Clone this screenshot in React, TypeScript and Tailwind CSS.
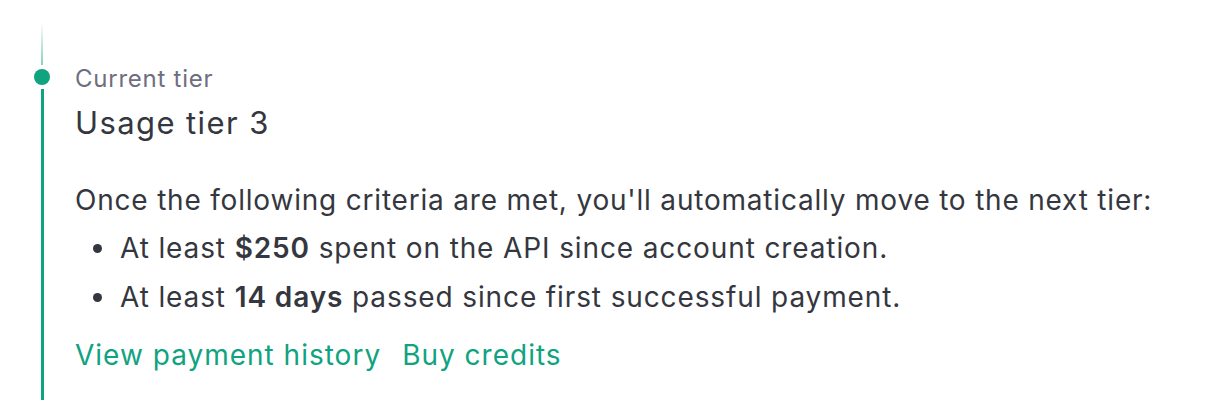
export default function App() {
  return (
    <div className="w-[1218px] h-[400px] overflow-hidden bg-white font-['Inter','Noto_Sans',sans-serif] text-[#353740]">
      <div className="flex h-full pl-[34px] pt-[22px]">
        {/* timeline rail */}
        <div className="flex flex-col items-center w-[16px] shrink-0">
          <div className="w-[2px] h-[43px] bg-gradient-to-b from-transparent to-[#10a37f]/50" />
          <div className="w-[16px] h-[16px] rounded-full bg-[#10a37f] my-[4px] shrink-0" />
          <div className="w-[3px] flex-1 bg-[#10a37f]" />
        </div>

        <div className="pl-[25px] pt-[41px]">
          <div className="text-[24px] leading-[32px] tracking-[0.75px] text-[#6e6e80]">Current tier</div>
          <div className="text-[31px] leading-[40px] tracking-[1.4px] mt-[8px]">Usage tier 3</div>

          <p className="text-[28px] leading-[48px] mt-[33px] tracking-[0.8px] whitespace-nowrap">
            Once the following criteria are met, you'll automatically move to the next tier:
          </p>
          <ul className="text-[28px] leading-[49px] tracking-[0.88px]">
            <li className="flex items-center">
              <span className="w-[45px] flex justify-center">
                <span className="w-[9px] h-[9px] rounded-full bg-[#353740]" />
              </span>
              <span>
                At least <strong className="font-semibold">$250</strong> spent on the API since account creation.
              </span>
            </li>
            <li className="flex items-center">
              <span className="w-[45px] flex justify-center">
                <span className="w-[9px] h-[9px] rounded-full bg-[#353740]" />
              </span>
              <span>
                At least <strong className="font-semibold">14 days</strong> passed since first successful payment.
              </span>
            </li>
          </ul>

          <div className="flex gap-[21px] text-[28px] leading-[48px] mt-[9px] text-[#10a37f] tracking-[1px]">
            <a href="#">View payment history</a>
            <a href="#">Buy credits</a>
          </div>
        </div>
      </div>
    </div>
  );
}
